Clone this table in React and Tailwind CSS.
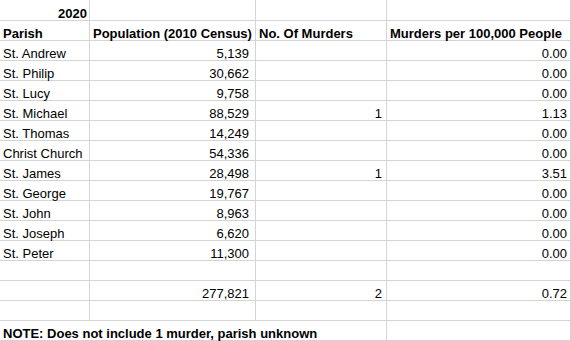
import React from 'react';

const rows = [
  ['St. Andrew', '5,139', '', '0.00'],
  ['St. Philip', '30,662', '', '0.00'],
  ['St. Lucy', '9,758', '', '0.00'],
  ['St. Michael', '88,529', '1', '1.13'],
  ['St. Thomas', '14,249', '', '0.00'],
  ['Christ Church', '54,336', '', '0.00'],
  ['St. James', '28,498', '1', '3.51'],
  ['St. George', '19,767', '', '0.00'],
  ['St. John', '8,963', '', '0.00'],
  ['St. Joseph', '6,620', '', '0.00'],
  ['St. Peter', '11,300', '', '0.00'],
];

const Cell = ({ children, className = '' }) => (
  <div className={`bg-white flex items-end leading-none whitespace-nowrap ${className}`}>
    {children}
  </div>
);

const Row = ({ a, b, c, d }) => (
  <>
    <Cell className="pl-[3px]">{a}</Cell>
    <Cell className="justify-end pr-[6px]">{b}</Cell>
    <Cell className="justify-end pr-[4px]">{c}</Cell>
    <Cell className="justify-end pr-[3px]">{d}</Cell>
  </>
);

export default function App() {
  return (
    <div
      className="w-[571px] h-[341px] bg-[#d4d4d4] pr-px pb-px grid grid-cols-[89px_165px_130px_183px] grid-rows-[20px_repeat(16,19px)] gap-px text-[13px] text-black"
      style={{ fontFamily: '"Liberation Sans", Arial, sans-serif' }}
    >
      <Cell className="justify-end pr-[2px] font-bold">2020</Cell>
      <Cell />
      <Cell />
      <Cell />

      <Cell className="pl-[3px] font-bold">Parish</Cell>
      <Cell className="pl-[3px] font-bold">Population (2010 Census)</Cell>
      <Cell className="pl-[3px] font-bold">No. Of Murders</Cell>
      <Cell className="pl-[3px] font-bold">Murders per 100,000 People</Cell>

      {rows.map(r => (
        <Row key={r[0]} a={r[0]} b={r[1]} c={r[2]} d={r[3]} />
      ))}

      <Row a="" b="" c="" d="" />
      <Row a="" b="277,821" c="2" d="0.72" />
      <Row a="" b="" c="" d="" />

      <Cell className="col-span-3 pl-[3px] font-bold">NOTE: Does not include 1 murder, parish unknown</Cell>
      <Cell />
    </div>
  );
}
